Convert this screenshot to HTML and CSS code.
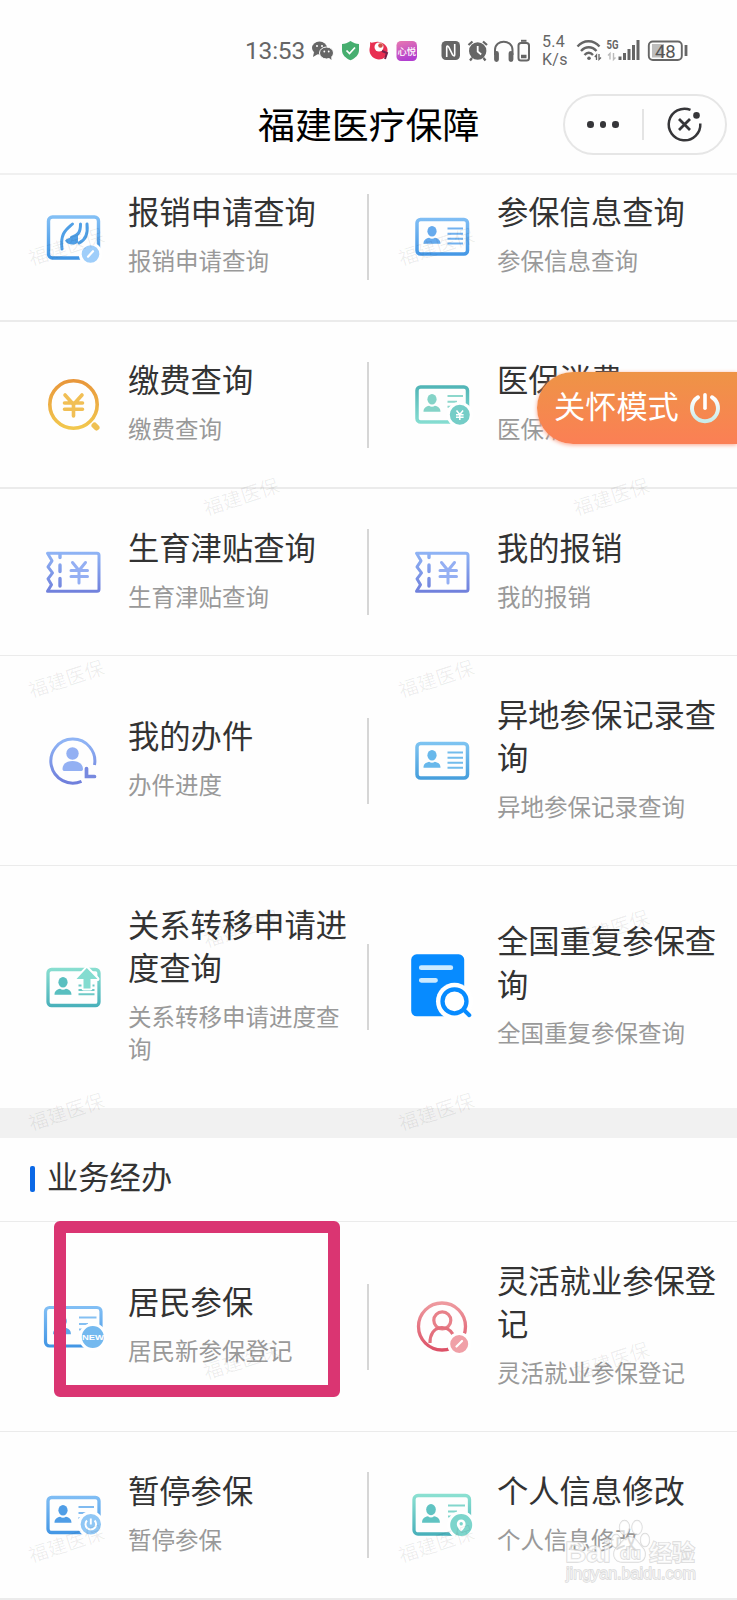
FILE: index.html
```html
<!DOCTYPE html>
<html lang="zh-CN">
<head>
<meta charset="utf-8">
<title>福建医疗保障</title>
<link rel="stylesheet" href="styles.css">
</head>
<body>
<svg class="defs" width="0" height="0">
  <defs>
    <linearGradient id="blue" gradientUnits="userSpaceOnUse" x1="0" y1="10" x2="0" y2="50"><stop offset="0" stop-color="#82bff5"/><stop offset="1" stop-color="#4195e4"/></linearGradient>
    <linearGradient id="sky" gradientUnits="userSpaceOnUse" x1="0" y1="10" x2="0" y2="50"><stop offset="0" stop-color="#80c5f2"/><stop offset="1" stop-color="#429cdb"/></linearGradient>
    <linearGradient id="teal" gradientUnits="userSpaceOnUse" x1="0" y1="10" x2="0" y2="50"><stop offset="0" stop-color="#4fb4b6"/><stop offset="1" stop-color="#88dfd2"/></linearGradient>
    <linearGradient id="mint" gradientUnits="userSpaceOnUse" x1="0" y1="10" x2="0" y2="50"><stop offset="0" stop-color="#8be0d1"/><stop offset="1" stop-color="#48b0ba"/></linearGradient>
    <linearGradient id="violet" gradientUnits="userSpaceOnUse" x1="0" y1="10" x2="0" y2="50"><stop offset="0" stop-color="#8fb4f5"/><stop offset="1" stop-color="#7080dc"/></linearGradient>
    <linearGradient id="gold" gradientUnits="userSpaceOnUse" x1="0" y1="5" x2="0" y2="54"><stop offset="0" stop-color="#e8963a"/><stop offset="1" stop-color="#f2c84e"/></linearGradient>
    <linearGradient id="rose" gradientUnits="userSpaceOnUse" x1="0" y1="6" x2="0" y2="54"><stop offset="0" stop-color="#ee9a9f"/><stop offset="1" stop-color="#dc5066"/></linearGradient>
    <linearGradient id="app" x1="0" y1="0" x2=".3" y2="1"><stop offset="0" stop-color="#e879b0"/><stop offset="1" stop-color="#b23fd0"/></linearGradient>
    <linearGradient id="power" x1="0" y1="0" x2="0" y2="1"><stop offset="0" stop-color="#fff"/><stop offset="1" stop-color="#c9ecea"/></linearGradient>
    <symbol id="person" viewBox="0 0 18 20" overflow="visible"><ellipse cx="9" cy="5.3" rx="4.6" ry="5.3"/><path d="M.5 17.8c0-4 2.2-5.2 5.6-6.1 1.7 1.5 4.1 1.5 5.8 0 3.4.9 5.6 2.1 5.6 6.1z"/></symbol>
    <symbol id="ticket" viewBox="0 0 60 60">
      <path d="M4.500 11.300H54a2 2 0 0 1 2 2v34a2 2 0 0 1-2 2H4.500l4-6.500-3.500-6 4.500-6-4.500-6 4-6z" fill="none" stroke="url(#violet)" stroke-width="3" stroke-linejoin="round"/>
      <path d="M17 12v3.500M17 23v6.500M17 36.500v7.500" fill="none" stroke="url(#violet)" stroke-width="3.400" stroke-linecap="round"/>
      <path d="M29.500 20.500 36 28.500 42.500 20.500M36 28.500V41M28 28.500H44.500M28 34.500H44.500" fill="none" stroke="#94aff3" stroke-width="3" stroke-linecap="round"/>
    </symbol>
  </defs>
</svg>

<div class="screen">
  <div class="status">
    <span class="time">13:53</span>
    <svg class="st" width="164" height="30" viewBox="308 35 164 30">
      <g fill="#666"><ellipse cx="319.500" cy="48" rx="7.500" ry="6.500"/><path d="m314 52-1 5 5-3z"/></g>
      <ellipse cx="326.500" cy="53" rx="7" ry="6" fill="#666" stroke="#fff" stroke-width="1"/><path d="m328 57 3.500 3-.5-4z" fill="#666"/>
      <g fill="#fff"><circle cx="317" cy="46" r="1"/><circle cx="322" cy="46" r="1"/><circle cx="324.300" cy="51.500" r=".9"/><circle cx="328.700" cy="51.500" r=".9"/></g>
      <path d="M350.500 41c3 2 5.500 2.700 8.500 3v6c0 5-3.500 8-8.500 10.300C345.500 58 342 55 342 50v-6c3-.3 5.500-1 8.500-3z" fill="#46ae6f"/><path d="m346.500 50.500 3 3 5.500-6" fill="none" stroke="#fff" stroke-width="1.700"/>
      <path d="M370 42c2 2 5-1 9 0 6 1 9 5 8.500 9-.5 5-4 8.500-8.500 8.500s-9.500-4-9.500-9c0-3 1-4 .5-8.500z" fill="#e82f51"/><circle cx="379" cy="47" r="4.500" fill="#fff"/><circle cx="380.500" cy="45.500" r="2.300" fill="#ce5046"/><path d="m382 51 5 2-2 6" stroke="#78204a" stroke-width="2" fill="none"/>
      <rect x="396.500" y="41" width="20.500" height="20" rx="4.500" fill="url(#app)"/><text x="406.700" y="54.500" text-anchor="middle" font-size="9.300" font-weight="500" fill="#fff">心悦</text>
      <rect x="441.500" y="41" width="18.500" height="19" rx="4.500" fill="#666"/><path d="M446.700 57V47.500q0-2.500 2-.5l4 8q2 2 2-.5V44" fill="none" stroke="#fff" stroke-width="1.600"/>
    </svg>
    <svg class="st" width="64" height="30" viewBox="466 35 64 30">
      <g fill="none" stroke="#666"><circle cx="477.700" cy="51" r="8.700" fill="#666" stroke="none"/><path d="m468.500 45 4-3.500M487 45l-4-3.500M472 58l-2 2.500M483.500 58l2 2.500" stroke-width="2.300"/><path d="M477.700 46v5.500l3.500 3" stroke="#fff" stroke-width="1.800"/>
      <path d="M495 55v-5c0-11 17.500-11 17.500 0v5" stroke-width="2"/><path d="M496.500 53.500v6M511 53.500v6" stroke-width="4.800" stroke-linecap="round"/>
      <rect x="518.500" y="43" width="10.500" height="17.500" rx="2.500" stroke-width="2"/><path d="M521 40.800h5.500" stroke-width="2"/><path d="M521 56.500h5.500" stroke-width="3.500"/></g>
    </svg>
    <span class="speed">5.4<br>K/s</span>
    <svg class="st wifi" width="116" height="30" viewBox="576 35 116 30">
      <g fill="none" stroke="#666"><path d="M577.500 46.500c6-7 16-7 22 0M581 51c4.500-5 11-5 15.500 0M584.500 55c2.500-3 6-3 8.500 0" stroke-width="2.300"/><circle cx="589" cy="58.300" r="1.800" fill="#666" stroke="none"/><path d="M596.500 60v-5l-1.700 2M599 54v5.500l2-2" stroke-width="1.300"/></g>
      <text x="606.500" y="49" font-size="12" font-weight="700" fill="#666" textLength="12" lengthAdjust="spacingAndGlyphs" class="net">5G</text>
      <path d="M610 59.500v-6l-2 2M613.500 53v6.500l2-2" fill="none" stroke="#bbb" stroke-width="1.400"/>
      <path d="M620 60v-3.500M624.500 60v-7M629 60v-11M633.500 60v-15M638 60V40" stroke="#666" stroke-width="3"/>
      <rect x="648.800" y="41.500" width="33" height="18.500" rx="4" fill="none" stroke="#666" stroke-width="1.900"/><rect x="652" y="44" width="12" height="13.500" fill="#bdbdbd"/><path d="M686 45v11" stroke="#666" stroke-width="2.800"/>
      <text x="665.300" y="57.500" text-anchor="middle" font-size="18.500" fill="#555" class="net">48</text>
    </svg>
  </div>

  <header class="topbar">
    <h1>福建医疗保障</h1>
    <div class="capsule">
      <span class="dots"><i></i><i></i><i></i></span>
      <span class="bar"></span>
      <svg width="40" height="40" viewBox="0 0 40 40" fill="none" stroke="#363639" stroke-width="2.500"><path d="M26.500 4.900A15.800 15.800 0 1 0 36.300 18.500"/><path d="m15 14 11 11m0-11-11 11" stroke-width="2.800"/><circle cx="32.500" cy="10.400" r="3.300" fill="#363639" stroke="none"/></svg>
    </div>
  </header>

  <main>
    <div class="row first">
      <div class="cell">
        <svg class="icon" viewBox="0 0 60 60"><rect x="5.500" y="10" width="50" height="41" rx="4" fill="none" stroke="url(#blue)" stroke-width="3.400"/><path d="M29.500 17C23 23 17 26 19 42M37.500 17c0 8-2 11-9 13.500M44 17c1 9-1 16-8 19" fill="none" stroke="#4f9fe6" stroke-width="3" stroke-linecap="round"/><path d="M22 33.500c4-4 9-2 13-6v8c-3 3-11 3-13-2z" fill="#4f9fe6"/><circle cx="47.500" cy="47" r="10.300" fill="#9fcefa" stroke="#fff" stroke-width="3"/><path d="m45 49.700 5-5.500" stroke="#fff" stroke-width="2.200" stroke-linecap="round"/></svg>
        <div class="copy"><h2>报销申请查询</h2><p>报销申请查询</p></div>
      </div>
      <div class="cell">
        <svg class="icon" viewBox="0 0 60 60"><rect x="5" y="12.500" width="50.500" height="34.500" rx="3.500" fill="none" stroke="url(#blue)" stroke-width="3.500"/><use href="#person" x="11" y="19" width="18" height="20" fill="#66aaed"/><path d="M35.500 21.500H51M35.500 26.700H51M35.500 31.700H51M35.500 36.500H51" stroke="#72b1ef" stroke-width="1.900"/></svg>
        <div class="copy"><h2>参保信息查询</h2><p>参保信息查询</p></div>
      </div>
    </div>

    <div class="row">
      <div class="cell">
        <svg class="icon" viewBox="0 0 60 60"><circle cx="30.500" cy="29.500" r="23.700" fill="none" stroke="url(#gold)" stroke-width="3.600"/><path d="m51.500 50.500 2 2" stroke="#efc052" stroke-width="6" stroke-linecap="round"/><path d="M22 20 30.500 29.500 39 20M30.500 29.500V41M21.500 28H39.500M21.500 34.300H39.500" fill="none" stroke="#f1bf55" stroke-width="3.600" stroke-linecap="round"/></svg>
        <div class="copy"><h2>缴费查询</h2><p>缴费查询</p></div>
      </div>
      <div class="cell">
        <svg class="icon" viewBox="0 0 60 60"><rect x="5" y="12" width="50.500" height="35" rx="3.500" fill="none" stroke="url(#teal)" stroke-width="3.500"/><use href="#person" x="11" y="19" width="18" height="20" fill="#84d3c7"/><path d="M35.500 21H51M35.500 26.700H45M35.500 31.700H39" stroke="#8cd7cc" stroke-width="1.900"/><circle cx="47.800" cy="39.800" r="11.500" fill="#75cdc7" stroke="#fff" stroke-width="3"/><path d="m44.500 35.500 3.300 4 3.300-4M47.800 39.500v5.500M44 39.700h7.600M44 42.300h7.600" fill="none" stroke="#fff" stroke-width="1.500"/></svg>
        <div class="copy"><h2>医保消费</h2><p>医保消费</p></div>
      </div>
    </div>

    <div class="row thin">
      <div class="cell">
        <svg class="icon"><use href="#ticket"/></svg>
        <div class="copy"><h2>生育津贴查询</h2><p>生育津贴查询</p></div>
      </div>
      <div class="cell">
        <svg class="icon"><use href="#ticket"/></svg>
        <div class="copy"><h2>我的报销</h2><p>我的报销</p></div>
      </div>
    </div>

    <div class="row tall">
      <div class="cell">
        <svg class="icon" viewBox="0 0 60 60"><path d="M51.500 34A22 22 0 1 0 38.500 50.300" fill="none" stroke="url(#violet)" stroke-width="3"/><circle cx="29.500" cy="22.500" r="6.200" fill="#93b0f3"/><path d="M19.500 38c0-5 4-8 10-8s10.500 3 10.500 8c0 1.500-1 2-2 2h-16.500c-1 0-2-.5-2-2z" fill="#93b0f3"/><path d="M43.500 37.500v8h8" fill="none" stroke="#7789df" stroke-width="3.700" stroke-linecap="round"/></svg>
        <div class="copy"><h2>我的办件</h2><p>办件进度</p></div>
      </div>
      <div class="cell">
        <svg class="icon" viewBox="0 0 60 60"><rect x="5" y="12.500" width="50.500" height="34.500" rx="3.500" fill="none" stroke="url(#sky)" stroke-width="3.500"/><use href="#person" x="11" y="19" width="18" height="20" fill="#68b8eb"/><path d="M35.500 21.500H51M35.500 26.700H51M35.500 31.700H51M35.500 36.700H51" stroke="#72bcec" stroke-width="1.900"/></svg>
        <div class="copy"><h2>异地参保记录查询</h2><p>异地参保记录查询</p></div>
      </div>
    </div>

    <div class="row tallest">
      <div class="cell">
        <svg class="icon" viewBox="0 0 60 60"><rect x="5" y="12.500" width="51" height="36" rx="3.500" fill="none" stroke="url(#mint)" stroke-width="3.300"/><use href="#person" x="11" y="20" width="18" height="20" fill="#59bfc0"/><path d="M35.500 28.500H51.500M35.500 33H51.500M35.500 37.300H51.500" stroke="#6dc9c6" stroke-width="1.900"/><path d="M43.800 11 54.500 22H47.500V31.500H40.500V22H33.500z" fill="#84dcd0" stroke="#fff" stroke-width="4" stroke-linejoin="round" paint-order="stroke"/></svg>
        <div class="copy"><h2>关系转移申请进度查询</h2><p>关系转移申请进度查询</p></div>
      </div>
      <div class="cell">
        <svg class="icon" viewBox="0 0 60 60"><rect x="-.8" y="-2.700" width="53" height="62" rx="5.500" fill="#078bff"/><path d="M9.300 10.700H38.800M9.300 23.300H23.500" stroke="#cbeaff" stroke-width="4.800" stroke-linecap="round"/><circle cx="42.500" cy="44.300" r="18.500" fill="#fff"/><path d="m51 53 6 5.500" stroke="#fff" stroke-width="9"/><circle cx="42.500" cy="44.300" r="12" fill="#fff" stroke="#078bff" stroke-width="4.300"/><path d="m52 53 5.300 5.200" stroke="#078bff" stroke-width="4" stroke-linecap="round"/></svg>
        <div class="copy"><h2>全国重复参保查询</h2><p>全国重复参保查询</p></div>
      </div>
    </div>

    <div class="section"><span class="mark"></span><h2>业务经办</h2></div>

    <div class="row tall">
      <div class="cell">
        <svg class="icon" viewBox="0 0 60 60"><rect x="2.500" y="10.500" width="55.500" height="38.500" rx="4" fill="none" stroke="url(#blue)" stroke-width="3.200"/><use href="#person" x="9.500" y="18.500" width="19" height="21" fill="#5fa8ea"/><path d="M36 20.500H53.500M36 27H45M36 32.500H39" stroke="#84bff2" stroke-width="1.900"/><circle cx="49.800" cy="40" r="12.500" fill="#74b9ef" stroke="#fff" stroke-width="3"/><text x="50" y="43" text-anchor="middle" class="latin" font-size="8" font-weight="700" fill="#fff" textLength="22" lengthAdjust="spacingAndGlyphs">NEW</text></svg>
        <div class="copy"><h2>居民参保</h2><p>居民新参保登记</p></div>
        <div class="highlight"></div>
      </div>
      <div class="cell">
        <svg class="icon" viewBox="0 0 60 60"><circle cx="30" cy="29.500" r="23.500" fill="none" stroke="url(#rose)" stroke-width="3.300"/><circle cx="30.300" cy="23.300" r="8.500" fill="none" stroke="#e88089" stroke-width="3.200"/><path d="M18 46C18 27 36 27 41.500 38" fill="none" stroke="#e3707d" stroke-width="3.200"/><circle cx="47.200" cy="47" r="10.500" fill="#f0a0a7" stroke="#fff" stroke-width="3"/><path d="m44.500 49.500 5.500-5.500" stroke="#fff" stroke-width="2.200" stroke-linecap="round"/></svg>
        <div class="copy"><h2>灵活就业参保登记</h2><p>灵活就业参保登记</p></div>
      </div>
    </div>

    <div class="row last">
      <div class="cell">
        <svg class="icon" viewBox="0 0 60 60"><rect x="5" y="12.500" width="51" height="35" rx="3.500" fill="none" stroke="url(#blue)" stroke-width="3.300"/><use href="#person" x="11" y="20" width="18" height="20" fill="#4f9de6"/><path d="M35.500 22H51M35.500 28H44.500M35.500 33H39" stroke="#7fbaf0" stroke-width="1.900"/><circle cx="47.800" cy="39.300" r="11.700" fill="#90c7f5" stroke="#fff" stroke-width="3"/><path d="M44 35.500a5.300 5.300 0 1 0 7.600 0M47.800 33.500v6" fill="none" stroke="#fff" stroke-width="1.900"/></svg>
        <div class="copy"><h2>暂停参保</h2><p>暂停参保</p></div>
      </div>
      <div class="cell">
        <svg class="icon" viewBox="0 0 60 60"><rect x="2" y="10.500" width="55.500" height="38.500" rx="4" fill="none" stroke="url(#mint)" stroke-width="3.300"/><use href="#person" x="9.500" y="19" width="19" height="21" fill="#60c3c2"/><path d="M36 20.500H53M36 26.500H45M36 31.500H39" stroke="#82d6cc" stroke-width="1.900"/><circle cx="49.200" cy="40" r="12.500" fill="#7dd5cc" stroke="#fff" stroke-width="3"/><path d="M49.200 46.500c-7-6-4.500-12 0-12s7 6 0 12z" fill="#fff"/><circle cx="49.200" cy="38.800" r="1.700" fill="#7dd5cc"/></svg>
        <div class="copy"><h2>个人信息修改</h2><p>个人信息修改</p></div>
      </div>
    </div>
  </main>

  <div class="care"><span>关怀模式</span><svg width="32" height="32" viewBox="0 0 32 32" fill="none" stroke="url(#power)" stroke-linecap="round"><path d="M9 5.300a13 13 0 1 0 14 0" stroke-width="4"/><rect x="14.200" y="1" width="3.600" height="17" rx="1.800" fill="#fff" stroke="none"/></svg></div>

  <div class="stamps">
    <span style="left:66px;top:246px">福建医保</span><span style="left:436px;top:246px">福建医保</span>
    <span style="left:241px;top:496px">福建医保</span><span style="left:611px;top:496px">福建医保</span>
    <span style="left:66px;top:678px">福建医保</span><span style="left:436px;top:678px">福建医保</span>
    <span style="left:241px;top:928px">福建医保</span><span style="left:611px;top:928px">福建医保</span>
    <span style="left:66px;top:1111px">福建医保</span><span style="left:436px;top:1111px">福建医保</span>
    <span style="left:241px;top:1360px">福建医保</span><span style="left:611px;top:1360px">福建医保</span>
    <span style="left:66px;top:1543px">福建医保</span><span style="left:436px;top:1543px">福建医保</span>
  </div>

  <svg class="credit" width="150" height="72" viewBox="555 1515 150 72">
    <g fill="#fff" fill-opacity=".65" stroke="#c8c8c8" stroke-opacity=".7" stroke-width="1.300" paint-order="stroke">
      <text x="565" y="1562" font-size="29" font-weight="700" class="latin" textLength="46" lengthAdjust="spacingAndGlyphs">Bai</text>
      <ellipse cx="616" cy="1541" rx="4.500" ry="6.500"/><ellipse cx="624.500" cy="1527.500" rx="5" ry="7"/><ellipse cx="637" cy="1527.500" rx="5" ry="7"/><ellipse cx="645" cy="1540" rx="4.500" ry="6.500"/>
      <path d="M630 1537c6 0 8 6 12 10 6 6 3 15-4 15h-16c-8 0-11-9-5-15 5-4 7-10 13-10z"/>
      <text x="620" y="1559" font-size="17" font-weight="700" class="latin">du</text>
      <text x="649" y="1561" font-size="23" font-weight="700">经验</text>
      <text x="566" y="1579" font-size="17" class="latin" textLength="130" lengthAdjust="spacingAndGlyphs">jingyan.baidu.com</text>
    </g>
  </svg>
</div>
</body>
</html>
```

FILE: styles.css
```css
* { box-sizing: border-box; }
body, h1, h2, p { margin: 0; }
body {
  background: #fefefe;
  font-family: "Noto Sans CJK SC", "Noto Sans", sans-serif;
  color: #333;
}
.defs { position: absolute; }
.screen { position: relative; width: 737px; height: 1600px; overflow: hidden; }

.status { display: flex; align-items: flex-start; height: 80px; padding: 35px 0 15px 245px; }
.time {
  width: 63px;
  font: 24.5px/31px Roboto, sans-serif;
  letter-spacing: -.2px;
  color: #666;
}
.st { display: block; flex: none; }
.st + .st { margin-left: -6px; }
.speed {
  width: 46px;
  padding-left: 12px;
  margin-top: -2px;
  font: 16px/18px Roboto, sans-serif;
  letter-spacing: .3px;
  color: #666;
  white-space: nowrap;
}
.net { font-family: Roboto, sans-serif; }
.latin { font-family: "Liberation Sans", sans-serif; }

.topbar {
  display: grid;
  grid-template-columns: 1fr auto;
  align-items: center;
  height: 95px;
  padding: 0 10px 4px 258px;
  border-bottom: 2px solid #f0f0f0;
}
.topbar h1 { padding-bottom: 3px; font-size: 36.900px; line-height: 54px; font-weight: 400; color: #000; }
.capsule {
  display: flex;
  align-items: center;
  width: 164px;
  height: 61px;
  border: 2px solid #e6e6e6;
  border-radius: 31px;
}
.dots { display: flex; gap: 6px; padding-left: 22px; }
.dots i { width: 6.500px; height: 6.500px; border-radius: 50%; background: #363639; }
.bar { width: 2px; height: 31px; margin: 0 20px 0 23px; background: #e4e4e4; }

.row {
  display: grid;
  grid-template-columns: 1fr 1fr;
  height: 167px;
  border-bottom: 2px solid #ebebeb;
}
.row.first { height: 147px; }
.row.first .cell { height: 167px; margin-top: -22px; }
.row.thin { border-bottom-width: 1px; }
.row.tall { height: 210px; border-bottom-width: 1px; }
.row.tallest { height: 242px; border-bottom: 0; }
.row.last { height: 168px; }
.cell {
  position: relative;
  display: flex;
  align-items: center;
  gap: 25px;
  padding: 0 12px 0 43px;
}
.cell + .cell { padding-left: 43.500px; }
.cell + .cell::before {
  content: "";
  position: absolute;
  left: -2px;
  top: calc(50% - 43px);
  width: 2px;
  height: 86px;
  background: #d6d6d6;
}
.icon { flex: none; width: 60px; height: 60px; overflow: visible; }
.copy { flex: 1; min-width: 0; display: flex; flex-direction: column; gap: 11.500px; padding-bottom: 7px; }
.copy h2 { font-size: 31.300px; line-height: 43.200px; font-weight: 400; color: #333; }
.copy p { font-size: 23.500px; line-height: 32.400px; color: #999; }

.section {
  display: flex;
  align-items: center;
  gap: 12px;
  height: 114px;
  padding: 0 30px 4px;
  border-top: 30px solid #f1f1f1;
  border-bottom: 1px solid #ebebeb;
}
.section h2 { padding-bottom: 4px; font-size: 31.300px; line-height: 44px; font-weight: 400; }
.mark { width: 5px; height: 26px; margin-top: 2px; border-radius: 2px; background: #0b68e6; }

.highlight {
  position: absolute;
  left: 54px;
  top: -1px;
  width: 286px;
  height: 176px;
  border: 12px solid #da3572;
  border-radius: 6px;
}

.care {
  position: absolute;
  left: 537px;
  top: 372px;
  display: flex;
  align-items: center;
  gap: 10px;
  width: 200px;
  height: 72px;
  padding-left: 17px;
  border-radius: 36px 0 0 36px;
  background: linear-gradient(#ee9446, #fb7f55);
  box-shadow: 0 1px 4px #f9a58c;
  color: #fff;
  font-size: 31.200px;
}
.care span { line-height: 44px; padding-bottom: 6px; }

.stamps span {
  position: absolute;
  transform: translate(-50%, -50%) rotate(-18deg);
  font-size: 19.500px;
  line-height: 28px;
  white-space: nowrap;
  color: rgba(0, 0, 0, .065);
}
.credit { position: absolute; left: 555px; top: 1515px; }
```
